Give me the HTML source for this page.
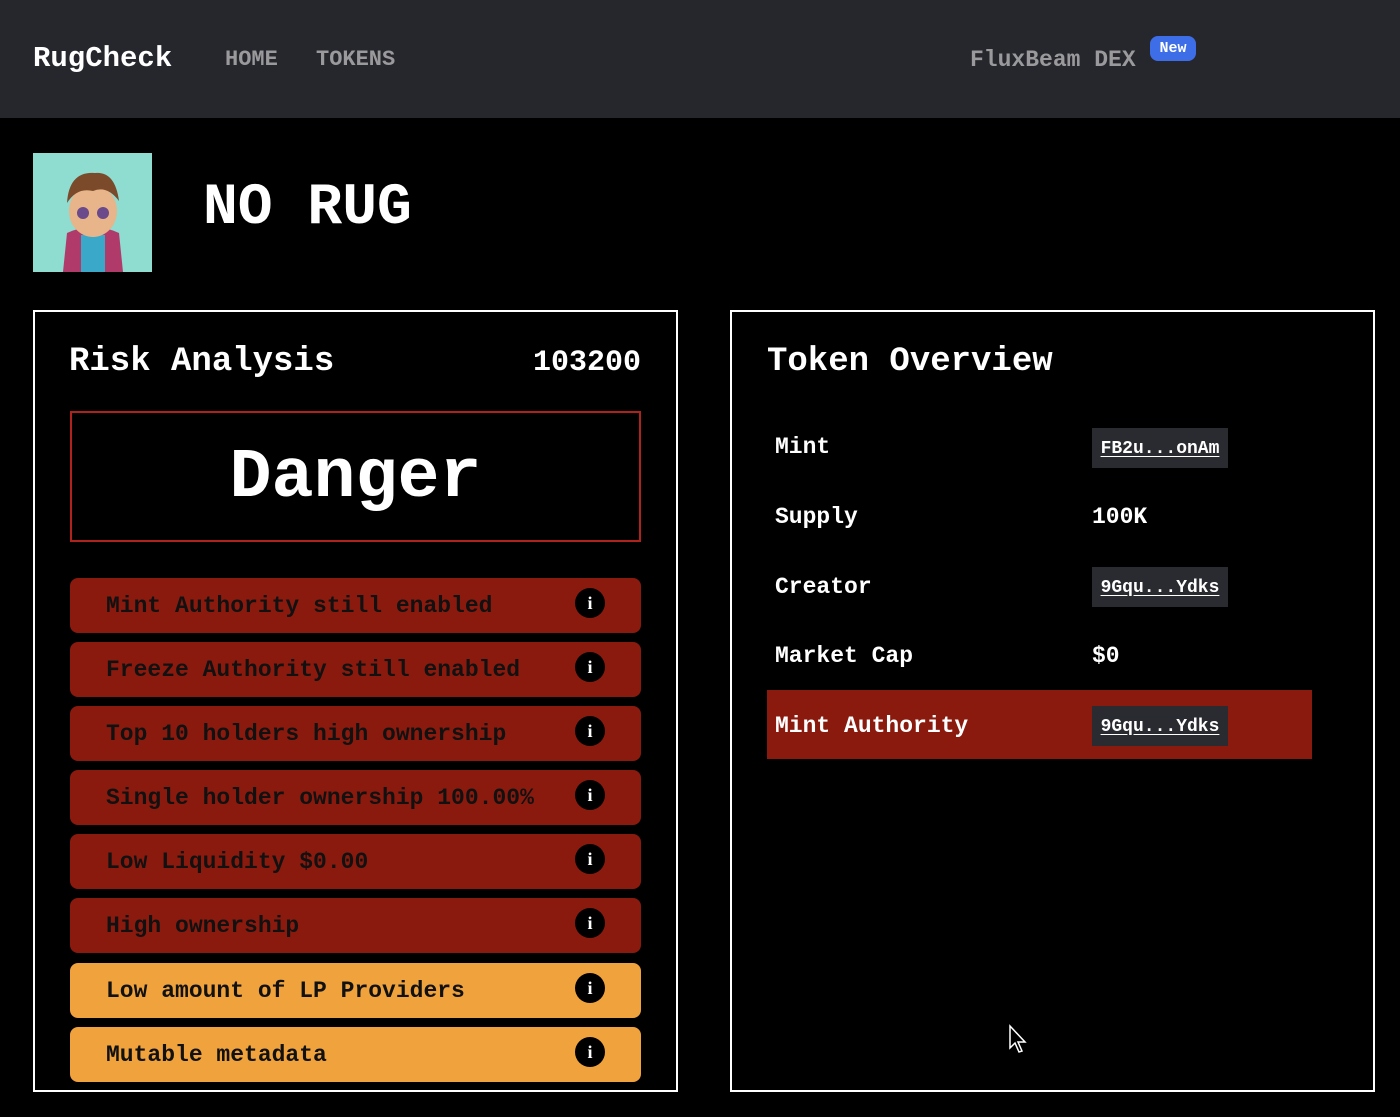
<!DOCTYPE html>
<html><head><style>
*{margin:0;padding:0;box-sizing:border-box}
body{width:1400px;height:1117px;background:#000;font-family:"Liberation Mono",monospace;font-weight:bold;color:#fff;position:relative;overflow:hidden}
.a{position:absolute;white-space:nowrap}
.hdr{position:absolute;left:0;top:0;width:1400px;height:118px;background:#26272c}
.panel{position:absolute;border:2px solid #fff;top:310px;height:782px}
.row{position:absolute;left:70px;width:571px;height:55px;border-radius:8px;background:#8b1a0e;color:#111;font-size:23px;line-height:57px;padding-left:36px}
.row.o{background:#f0a23c}
.row i{position:absolute;right:36px;top:10px;width:30px;height:30px;border-radius:50%;background:#000;color:#fff;font-style:normal;font-size:18px;line-height:30px;text-align:center;font-family:"Liberation Serif",serif}
.lbl{position:absolute;left:775px;font-size:23px}
.badge{position:absolute;left:1092px;width:136px;height:40px;background:#2a2b30;font-size:18px;line-height:42px;text-align:center;text-decoration:underline;text-underline-offset:3px}
</style></head><body>
<div class="hdr"></div>
<div class="a" style="left:33px;top:42px;font-size:29px;color:#fff">RugCheck</div>
<div class="a" style="left:225px;top:47px;font-size:22px;color:#9a9a9c">HOME</div>
<div class="a" style="left:316px;top:47px;font-size:22px;color:#9a9a9c">TOKENS</div>
<div class="a" style="left:970px;top:47px;font-size:23px;color:#9a9a9c">FluxBeam DEX</div>
<div class="a" style="left:1150px;top:36px;width:46px;height:25px;border-radius:8px;background:#3d6ee8;font-size:15px;line-height:25px;text-align:center">New</div>

<div class="a" style="left:33px;top:153px;width:119px;height:119px;background:#8fdcd0;overflow:hidden">
<svg width="119" height="119" viewBox="0 0 119 119">
<path d="M30 119 L34 80 Q60 68 86 80 L90 119Z" fill="#b03a6a"/>
<rect x="48" y="82" width="24" height="37" fill="#3aa8c8"/>
<ellipse cx="60" cy="58" rx="24" ry="26" fill="#e8b48a"/>
<path d="M34 50 Q36 18 62 20 Q82 18 86 48 Q74 32 60 38 Q44 34 34 50Z" fill="#7a4a2a"/>
<circle cx="50" cy="60" r="6" fill="#6a4a8a"/><circle cx="70" cy="60" r="6" fill="#6a4a8a"/>
</svg></div>
<div class="a" style="left:203px;top:174px;font-size:58px;line-height:70px">NO RUG</div>

<div class="panel" style="left:33px;width:645px"></div>
<div class="a" style="left:69px;top:343px;font-size:34px">Risk Analysis</div>
<div class="a" style="left:533px;top:346px;font-size:30px">103200</div>
<div class="a" style="left:70px;top:411px;width:571px;height:131px;border:2px solid #b0231c;text-align:center;font-size:70px;line-height:131px">Danger</div>

<div class="row" style="top:578px">Mint Authority still enabled<i>i</i></div>
<div class="row" style="top:642px">Freeze Authority still enabled<i>i</i></div>
<div class="row" style="top:706px">Top 10 holders high ownership<i>i</i></div>
<div class="row" style="top:770px">Single holder ownership 100.00%<i>i</i></div>
<div class="row" style="top:834px">Low Liquidity $0.00<i>i</i></div>
<div class="row" style="top:898px">High ownership<i>i</i></div>
<div class="row o" style="top:963px">Low amount of LP Providers<i>i</i></div>
<div class="row o" style="top:1027px">Mutable metadata<i>i</i></div>

<div class="panel" style="left:730px;width:645px"></div>
<div class="a" style="left:767px;top:343px;font-size:34px">Token Overview</div>
<div class="a" style="left:767px;top:690px;width:545px;height:69px;background:#8b1a0e"></div>
<div class="lbl" style="top:434px">Mint</div>
<div class="lbl" style="top:504px">Supply</div>
<div class="lbl" style="top:574px">Creator</div>
<div class="lbl" style="top:643px">Market Cap</div>
<div class="lbl" style="top:713px">Mint Authority</div>
<div class="badge" style="top:428px">FB2u...onAm</div>
<div class="a" style="left:1092px;top:504px;font-size:23px">100K</div>
<div class="badge" style="top:567px">9Gqu...Ydks</div>
<div class="a" style="left:1092px;top:643px;font-size:23px">$0</div>
<div class="badge" style="top:706px">9Gqu...Ydks</div>
<svg class="a" style="left:1008px;top:1024px" width="22" height="30" viewBox="0 0 22 30"><path d="M2 2 L2 24 L7 19 L11 28 L14 27 L10 18 L17 18Z" fill="#000" stroke="#fff" stroke-width="1.5"/></svg>
</body></html>
